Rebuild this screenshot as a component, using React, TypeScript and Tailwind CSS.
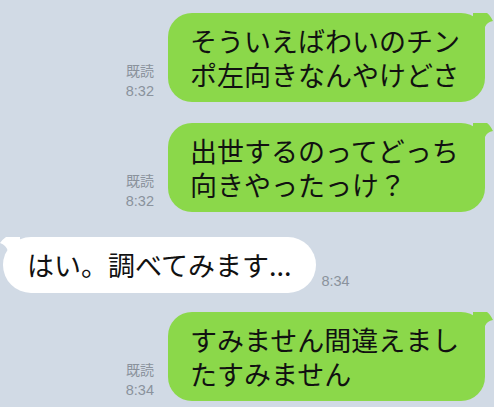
import React from "react";

type Msg = {
  id: number;
  mine: boolean;
  lines: string[];
  time: string;
};

const messages: Msg[] = [
  { id: 1, mine: true, lines: ["そういえばわいのチン", "ポ左向きなんやけどさ"], time: "8:32" },
  { id: 2, mine: true, lines: ["出世するのってどっち", "向きやったっけ？"], time: "8:32" },
  { id: 3, mine: false, lines: ["はい。調べてみます..."], time: "8:34" },
  { id: 4, mine: true, lines: ["すみません間違えまし", "たすみません"], time: "8:34" },
];

const jp = { fontFamily: '"Noto Sans CJK JP", "Noto Sans", sans-serif' };

function RightTail() {
  return (
    <svg
      className="absolute -right-[8px] top-0"
      width="20"
      height="30"
      viewBox="0 0 20 30"
    >
      <path d="M0 0 Q10 0 14 -0 Q17 2 20 8 Q14 9 12 14 L12 30 L0 30 Z" fill="#8bd84a" />
    </svg>
  );
}

function LeftTail() {
  return (
    <svg
      className="absolute -left-[3px] top-0"
      width="20"
      height="30"
      viewBox="0 0 20 30"
    >
      <path d="M20 0 Q10 0 6 0 Q3 2 0 6 Q6 8 8 14 L8 30 L20 30 Z" fill="#ffffff" />
    </svg>
  );
}

function Meta({ read, time }: { read: boolean; time: string }) {
  return (
    <div
      className="flex flex-col items-end text-[14.5px] leading-[21px] text-[#8a929c]"
      style={{ fontFamily: '"Liberation Sans", "Noto Sans CJK JP", sans-serif' }}
    >
      {read && <span style={jp} className="text-[14px]">既読</span>}
      <span>{time}</span>
    </div>
  );
}

export default function App() {
  return (
    <div className="h-screen w-full overflow-hidden bg-[#d1dae5] pt-[13px]">
      <div className="flex flex-col">
        {messages.map((m, i) => {
          const gap = i === 0 ? "" : i === 2 ? "mt-[25px]" : i === 3 ? "mt-[19px]" : "mt-[21px]";
          if (m.mine) {
            return (
              <div key={m.id} className={`flex items-end justify-end pr-[9px] ${gap}`}>
                <div className="mr-[14px]">
                  <Meta read time={m.time} />
                </div>
                <div
                  className="relative w-[317px] rounded-[24px] bg-[#8bd84a] pl-[22px] pr-[20px] pt-[11px] pb-[10px] text-[27px] leading-[34px] text-[#111111] whitespace-nowrap"
                  style={jp}
                >
                  <RightTail />
                  <div className="relative">
                    {m.lines.map((l) => (
                      <div key={l}>{l}</div>
                    ))}
                  </div>
                </div>
              </div>
            );
          }
          return (
            <div key={m.id} className={`flex items-end pl-[3px] ${gap}`}>
              <div
                className="relative rounded-[28px] bg-white pl-[24px] pr-[25px] pt-[11px] pb-[11px] text-[27px] leading-[34px] text-[#111111] whitespace-nowrap"
                style={jp}
              >
                <LeftTail />
                <div className="relative">{m.lines[0]}</div>
              </div>
              <div className="ml-[5px] mb-[1px]">
                <Meta read={false} time={m.time} />
              </div>
            </div>
          );
        })}
      </div>
    </div>
  );
}
